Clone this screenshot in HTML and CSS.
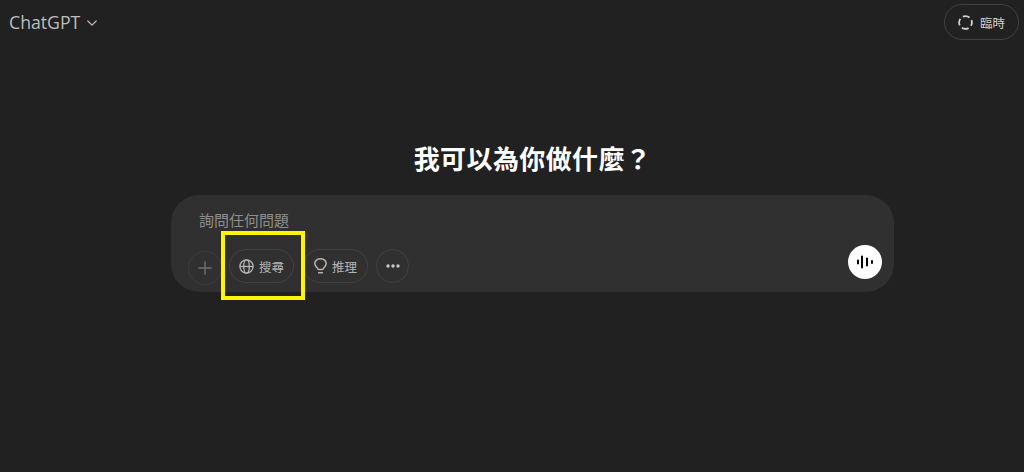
FILE: index.html
```html
<!DOCTYPE html>
<html lang="zh-Hant">
<head>
  <title>ChatGPT</title>
  <meta charset="UTF-8">
  <meta name="viewport" content="width=device-width, initial-scale=1.0">
  <link rel="stylesheet" href="styles.css">
</head>
<body>
  <div class="header">
    <div class="model-name">
      ChatGPT
      <svg class="chevron" width="10" height="10" viewBox="0 0 10 10"><path d="M.8 3l4.200 4.200L9.200 3" fill="none" stroke="currentColor" stroke-width="1.200" stroke-linecap="round" stroke-linejoin="round"/></svg>
    </div>
    <button class="temp-btn">
      <svg width="15" height="15" viewBox="0 0 15 15"><circle cx="7.500" cy="7.500" r="6.400" fill="none" stroke="currentColor" stroke-width="1.800" stroke-dasharray="7 3.050" stroke-dashoffset="3.500"/></svg>
      臨時
    </button>
  </div>
  <div class="main">
    <h1>我可以為你做什麼？</h1>
    <div class="composer">
      <div class="placeholder">詢問任何問題</div>
      <div class="toolbar">
        <button class="round-btn plus-btn">
          <svg width="14" height="14" viewBox="0 0 14 14"><path d="M7 .8v12.400M.8 7h12.400" fill="none" stroke="currentColor" stroke-width="1.400" stroke-linecap="round"/></svg>
        </button>
        <button class="pill-btn search-btn">
          <svg width="15" height="15" viewBox="0 0 15 15" fill="none" stroke="currentColor" stroke-width="1.300"><circle cx="7.500" cy="7.500" r="6.600"/><ellipse cx="7.500" cy="7.500" rx="2.800" ry="6.600"/><path d="M.9 7.500h13.200"/></svg>
          搜尋
        </button>
        <button class="pill-btn reason-btn">
          <svg width="13" height="16" viewBox="0 0 13 16" fill="none" stroke="currentColor" stroke-width="1.500" stroke-linecap="round" stroke-linejoin="round"><path d="M4.200 11.500c0-1.700-3.400-2.900-3.400-5.900a5.700 4.900 0 0 1 11.400 0c0 3-3.400 4.200-3.400 5.900z"/><path d="M4.600 14.800h3.800"/></svg>
          推理
        </button>
        <button class="round-btn more-btn">
          <svg width="14" height="4" viewBox="0 0 14 4" fill="currentColor"><circle cx="2" cy="2" r="1.700"/><circle cx="7" cy="2" r="1.700"/><circle cx="12" cy="2" r="1.700"/></svg>
        </button>
        <button class="voice-btn">
          <svg width="16" height="16" viewBox="0 0 16 16" fill="none" stroke="#000" stroke-width="2" stroke-linecap="round"><path d="M1 6.500v3M5 2.500v11M10 4.500v7M15 7v2"/></svg>
        </button>
      </div>
    </div>
  </div>
  <div class="highlight"></div>
</body>
</html>
```

FILE: styles.css
```css
body {
  font-family: "Open Sans", "Liberation Sans", "Noto Sans CJK TC", sans-serif;
  background: #212121;
  color: #ececec;
  margin: 0;
  padding: 0;
  height: 472px;
  overflow: hidden;
}
button {
  font-family: inherit;
  background: none;
  cursor: pointer;
}
.header {
  display: flex;
  justify-content: space-between;
  align-items: center;
  height: 44px;
  padding: 0 5px 0 9px;
}
.model-name {
  display: flex;
  align-items: center;
  gap: 7px;
  font-size: 17.7px;
  font-weight: 500;
  color: #bdbdbd;
}
.chevron {
  margin-top: 1px;
}
.temp-btn {
  display: flex;
  align-items: center;
  gap: 7px;
  height: 36px;
  padding: 0 13px;
  border: 1px solid #424242;
  border-radius: 18px;
  color: #d0d0d0;
  font-size: 12.5px;
}
.main {
  display: flex;
  flex-direction: column;
  align-items: center;
  padding: 99px 0 0 41px;
}
h1 {
  margin: 0 0 20px;
  font-size: 26px;
  line-height: 32px;
  letter-spacing: 0.4px;
  font-weight: 700;
  color: #fff;
}
.composer {
  width: 723px;
  height: 97px;
  box-sizing: border-box;
  padding: 15px 12px 9px 17px;
  background: #303030;
  border-radius: 28px;
}
.placeholder {
  padding-left: 11px;
  font-size: 15px;
  line-height: 21px;
  color: #8e8e8e;
}
.toolbar {
  display: flex;
  align-items: center;
  gap: 8px;
  margin-top: 14px;
}
.round-btn, .pill-btn {
  display: flex;
  align-items: center;
  justify-content: center;
  height: 34px;
  padding: 0;
  border: 1px solid #424242;
  border-radius: 17px;
  color: #b4b4b4;
  font-size: 12.5px;
}
.round-btn {
  width: 34px;
}
.plus-btn {
  color: #6f6f6f;
  margin: 4px -1px 0 0;
  border-color: #3c3c3c;
}
.more-btn {
  width: 33px;
  color: #c8c8c8;
}
.pill-btn {
  gap: 5px;
  width: 65px;
}
.reason-btn {
  margin-left: 1px;
}
.voice-btn {
  display: flex;
  align-items: center;
  justify-content: center;
  width: 34px;
  height: 34px;
  padding: 0;
  margin: 0 0 8px auto;
  border: none;
  border-radius: 50%;
  background: #fff;
}
/* annotation box around the search button */
.highlight {
  position: absolute;
  left: 221px;
  top: 231px;
  width: 76px;
  height: 61px;
  border: 4px solid #fff500;
}
```
